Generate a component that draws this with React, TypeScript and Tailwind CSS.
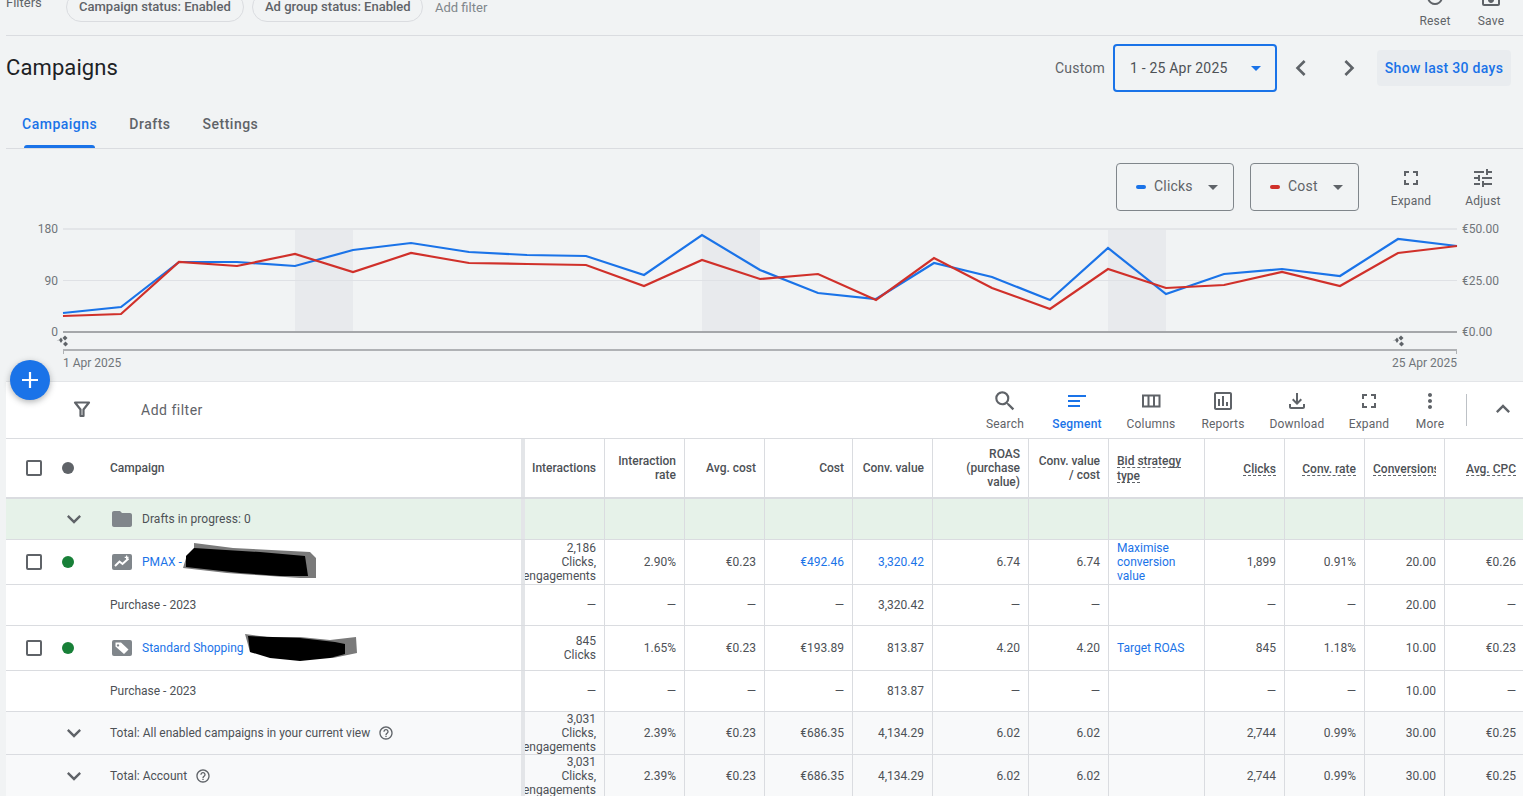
import type { ReactNode } from 'react'
import {
  MdArrowDropDown,
  MdChevronLeft,
  MdChevronRight,
  MdExpandLess,
  MdExpandMore,
  MdFolder,
  MdFullscreen,
  MdHelpOutline,
  MdMoreVert,
  MdOutlineAssessment,
  MdOutlineFileDownload,
  MdOutlineSave,
  MdRefresh,
  MdSearch,
  MdSegment,
  MdTune,
} from 'react-icons/md'

const GRID =
  'grid grid-cols-[519px_80px_80px_80px_88px_80px_96px_80px_96px_80px_80px_80px_80px]'

const xs = [63, 121, 179, 237, 295, 353, 411, 469, 527, 586, 644, 702, 760, 818, 876, 934, 992, 1050, 1108, 1166, 1224, 1282, 1340, 1398, 1457]
const blue = [313, 307, 262, 262, 266, 250, 243, 252, 255, 256, 275, 235, 270, 293, 299, 263, 277, 300, 248, 294, 274, 269, 276, 239, 246]
const red = [316, 314, 262, 266, 254, 272, 253, 263, 264, 265, 286, 260, 279, 274, 300, 258, 288, 309, 269, 288, 285, 272, 286, 253, 246]

const toPoints = (ys: number[]) => ys.map((y, i) => `${xs[i]},${y}`).join(' ')

function Sparkle({ x, y }: { x: number; y: number }) {
  return (
    <g transform={`translate(${x} ${y})`} fill="#5f6368">
      <path d="M-2-3.500-.2-.8-2 2-3.800-.8-6.500-.8-3.800-1.200Z" />
      <path d="M2-5.500 4.500-3 2-.5-.5-3Z" />
      <path d="M2.500.5 5 3 2.500 5.500 0 3Z" />
    </g>
  )
}

function TrendChart() {
  return (
    <svg viewBox="0 211 1523 170" className="block h-[170px] w-[1523px]">
      {[295, 702, 1108].map((x) => (
        <rect key={x} x={x} y={229} width={58} height={102} fill="#e8eaed" />
      ))}
      <line x1={63} x2={1457} y1={229} y2={229} stroke="#e3e5e8" strokeWidth={2} />
      <line x1={63} x2={1457} y1={280.500} y2={280.500} stroke="#dfe1e5" />
      <line x1={63} x2={1457} y1={332} y2={332} stroke="#a5a7aa" strokeWidth={2} />
      <line x1={63} x2={1457} y1={350} y2={350} stroke="#b0b2b5" strokeWidth={2} />
      <line x1={63.500} x2={63.500} y1={350} y2={354} stroke="#b0b2b5" />
      <line x1={1456.500} x2={1456.500} y1={350} y2={354} stroke="#b0b2b5" />
      <polyline points={toPoints(blue)} fill="none" stroke="#1a73e8" strokeWidth={2.200} />
      <polyline points={toPoints(red)} fill="none" stroke="#d0302a" strokeWidth={2.200} />
      <Sparkle x={63} y={341} />
      <Sparkle x={1399} y={341} />
      <g fill="#70757a" fontSize={12}>
        <text x={58} y={233} textAnchor="end">180</text>
        <text x={58} y={285} textAnchor="end">90</text>
        <text x={58} y={336} textAnchor="end">0</text>
        <text x={1462} y={233}>€50.00</text>
        <text x={1462} y={285}>€25.00</text>
        <text x={1462} y={336}>€0.00</text>
        <text x={63} y={367}>1 Apr 2025</text>
        <text x={1457} y={367} textAnchor="end">25 Apr 2025</text>
      </g>
    </svg>
  )
}

function ToolButton({ label, icon, width, active }: { label: string; icon: ReactNode; width: string; active?: boolean }) {
  return (
    <div className={`flex flex-col items-center ${width} ${active ? 'text-[#1a73e8]' : 'text-[#5f6368]'}`}>
      {icon}
      <span className={`mt-1 text-[12px] leading-[14px] tracking-[0.2px] ${active ? 'font-medium' : ''}`}>{label}</span>
    </div>
  )
}

function ColumnsIcon() {
  return (
    <svg viewBox="0 0 24 24" width={24} height={24}>
      <path d="M4 6.500h16.500v11H4ZM9.500 6.500v11M15 6.500v11" fill="none" stroke="currentColor" strokeWidth={2} />
    </svg>
  )
}

function FilterIcon() {
  return (
    <svg viewBox="0 0 24 24" width={24} height={24} className="ml-16 mt-2 text-[#5f6368]">
      <path d="M5 5.500h14l-5.500 7v6.500h-3v-6.500Z" fill="none" stroke="currentColor" strokeWidth={2.200} strokeLinejoin="round" />
    </svg>
  )
}

function MetricSelect({ label, dot, width }: { label: string; dot: string; width: string }) {
  return (
    <div className={`flex h-12 items-center rounded border border-[#80868b] pl-[19px] pr-2 ${width}`}>
      <span className={`h-1 w-2.5 rounded-full ${dot}`} />
      <span className="mb-0.5 ml-2 text-[14px] tracking-[0.2px] text-[#5f6368]">{label}</span>
      <MdArrowDropDown size={24} className="ml-auto text-[#5f6368]" />
    </div>
  )
}

function HeadCell({ children, left }: { children: ReactNode; left?: boolean }) {
  return (
    <div className={`flex flex-col justify-center border-r border-[#dadce0] px-2 text-[12px] font-medium leading-[14px] text-[#4d5156] ${left ? 'items-start' : 'items-end text-right'}`}>
      {children}
    </div>
  )
}

function Dashed({ children }: { children: ReactNode }) {
  return <span className="mt-0.5 block border-b border-dashed border-[#5f6368] leading-[12px]">{children}</span>
}

type Cell = string | string[] | { link: string | string[] }

function BodyCell({ value, left }: { value: Cell; left?: boolean }) {
  const isLink = typeof value === 'object' && !Array.isArray(value)
  const raw = isLink ? (value as { link: string | string[] }).link : (value as string | string[])
  const lines = Array.isArray(raw) ? raw : [raw]
  return (
    <div className={`flex flex-col justify-center overflow-hidden border-r border-[#dadce0] px-2 text-[12px] leading-[14px] ${left ? 'items-start' : 'items-end'} ${isLink ? 'text-[#1a73e8]' : 'text-[#4d5156]'}`}>
      {lines.map((line) => (
        <span key={line} className="whitespace-nowrap">{line}</span>
      ))}
    </div>
  )
}

function Checkbox() {
  return <span className="h-4 w-4 shrink-0 rounded-[2px] border-2 border-[#5f6368] bg-white" />
}

function CampaignIcon({ kind }: { kind: 'pmax' | 'tag' }) {
  return (
    <svg viewBox="0 0 20 16" className="ml-[38px] h-4 w-5 shrink-0">
      <rect width={20} height={16} rx={2} fill="#80868b" />
      {kind === 'pmax' ? (
        <>
          <path d="M3 12 7.500 7.500 10.500 10 16.500 4.500" fill="none" stroke="#fff" strokeWidth={2} />
          <path d="M14 1.500h1.200v1.300h1.300v1.200h-1.300v1.300H14V4h-1.300V2.800H14Z" fill="#fff" />
        </>
      ) : (
        <path d="M3.500 2.500h5.500l7.500 7-4.500 4.500-8.500-7.500ZM6 4.200a1.200 1.200 0 1 0 .01 0Z" fill="#fff" fillRule="evenodd" />
      )}
    </svg>
  )
}

function CampaignLeft({ name, kind }: { name: string; kind: 'pmax' | 'tag' }) {
  return (
    <div className="flex items-center border-r-[4px] border-[#e3e5e8] pl-5">
      <Checkbox />
      <span className="ml-5 h-3 w-3 rounded-full bg-[#188038]" />
      <CampaignIcon kind={kind} />
      <span className="ml-2.5 text-[12px] text-[#1a73e8]">{name}</span>
    </div>
  )
}

function ChevronLeft({ children }: { children: ReactNode }) {
  return (
    <div className="flex items-center border-r-[4px] border-[#e3e5e8] pl-14 text-[12px] text-[#4d5156]">
      <MdExpandMore size={28} className="-mx-0.5 shrink-0 text-[#5f6368]" />
      {children}
    </div>
  )
}

function PlainLeft({ text }: { text: string }) {
  return (
    <div className="flex items-center border-r-[4px] border-[#e3e5e8] pl-[104px] text-[12px] text-[#4d5156]">
      {text}
    </div>
  )
}

function Row({ left, cells, className }: { left: ReactNode; cells: Cell[]; className: string }) {
  return (
    <div className={`${GRID} border-b border-[#dadce0] ${className}`}>
      {left}
      {cells.map((c, i) => (
        <BodyCell key={i} value={c} left={i === 7} />
      ))}
    </div>
  )
}

const totals: Cell[] = [['3,031', 'Clicks,', 'engagements'], '2.39%', '€0.23', '€686.35', '4,134.29', '6.02', '6.02', '', '2,744', '0.99%', '30.00', '€0.25']

export default function App() {
  return (
    <div className="relative h-[796px] w-[1523px] overflow-hidden bg-[#f1f3f4] font-[Roboto,sans-serif]">
      {/* filters */}
      <div className="ml-1.5 flex h-9 items-start border-b border-[#dadce0]">
        <span className="-mt-1 w-[60px] text-[13px] leading-[14px] text-[#5f6368]">Filters</span>
        <div className="-mt-2 flex h-[30px] w-[178px] items-center rounded-full border border-[#dadce0] pl-3 text-[13px] font-medium text-[#5f6368]">Campaign status: Enabled</div>
        <div className="-mt-2 ml-2 flex h-[30px] w-[171px] items-center rounded-full border border-[#dadce0] pl-3 text-[13px] font-medium text-[#5f6368]">Ad group status: Enabled</div>
        <span className="ml-3 text-[13px] leading-[15px] text-[#80868b]">Add filter</span>
        <div className="ml-auto mr-1 flex">
          <div className="flex w-14 flex-col items-center text-[#5f6368]">
            <MdRefresh size={24} className="-mt-[15px]" />
            <span className="mt-[5px] text-[12px] leading-[14px] tracking-[0.2px]">Reset</span>
          </div>
          <div className="flex w-14 flex-col items-center text-[#5f6368]">
            <MdOutlineSave size={24} className="-mt-[15px]" />
            <span className="mt-[5px] text-[12px] leading-[14px] tracking-[0.2px]">Save</span>
          </div>
        </div>
      </div>

      {/* title row */}
      <div className="flex h-16 items-center pl-1.5 pr-3">
        <h1 className="-mt-0.5 text-[22px] font-normal tracking-[0.1px] text-[#202124]">Campaigns</h1>
        <div className="ml-auto flex items-center">
          <span className="text-[14px] tracking-[0.2px] text-[#5f6368]">Custom</span>
          <div className="ml-2 flex h-12 w-[164px] items-center justify-between rounded border-2 border-[#1a73e8] pl-[15px] pr-[7px]">
            <span className="text-[14px] tracking-[0.2px] text-[#4d5156]">1 - 25 Apr 2025</span>
            <MdArrowDropDown size={24} className="text-[#1a73e8]" />
          </div>
          <MdChevronLeft size={32} className="mx-2 text-[#5f6368]" />
          <MdChevronRight size={32} className="mx-2 text-[#5f6368]" />
          <div className="ml-1 flex h-9 w-[134px] items-center justify-center rounded bg-[#e9ecef] text-[14px] font-medium tracking-[0.3px] text-[#1a73e8]">
            Show last 30 days
          </div>
        </div>
      </div>

      {/* tabs */}
      <div className="ml-1.5 flex h-[49px] items-center gap-8 border-b border-[#dadce0] pl-4 text-[14px] font-medium tracking-[0.5px] text-[#5f6368]">
        <div className="relative flex h-full items-center text-[#1a73e8]">
          Campaigns
          <span className="absolute inset-x-0.5 bottom-0 h-[3px] rounded-t bg-[#1a73e8]" />
        </div>
        <span>Drafts</span>
        <span>Settings</span>
      </div>

      {/* chart controls */}
      <div className="flex h-[62px] items-start justify-end pr-1 pt-3.5">
        <MetricSelect label="Clicks" dot="bg-[#1a73e8]" width="w-[118px]" />
        <div className="w-4" />
        <MetricSelect label="Cost" dot="bg-[#d0302a]" width="w-[109px]" />
        <div className="ml-4 mt-[3px] flex">
          <ToolButton label="Expand" width="w-[72px]" icon={<MdFullscreen size={24} />} />
          <ToolButton label="Adjust" width="w-[72px]" icon={<MdTune size={24} />} />
        </div>
      </div>

      <TrendChart />

      {/* add button */}
      <div className="absolute left-2.5 top-[360px] z-10 flex h-10 w-10 items-center justify-center rounded-full bg-[#1a73e8] shadow-[0_2px_6px_rgba(60,64,67,0.4)]">
        <svg viewBox="0 0 20 20" className="h-5 w-5">
          <path d="M10 2v16M2 10h16" stroke="#fff" strokeWidth={2.200} />
        </svg>
      </div>

      {/* table panel */}
      <div className="relative ml-1.5 border-t border-[#e3e5e8] bg-white">
        <div className="flex h-[57px] items-start border-b border-[#dadce0] pr-1.5 pt-[7px]">
          <FilterIcon />
          <span className="ml-[47px] mt-[11px] text-[14px] tracking-[0.5px] text-[#5f6368]">Add filter</span>
          <div className="ml-auto flex items-start">
            <ToolButton label="Search" width="w-[72px]" icon={<MdSearch size={26} className="-my-px" />} />
            <ToolButton label="Segment" width="w-[72px]" active icon={<MdSegment size={24} className="-scale-x-100" />} />
            <ToolButton label="Columns" width="w-[76px]" icon={<ColumnsIcon />} />
            <ToolButton label="Reports" width="w-[68px]" icon={<MdOutlineAssessment size={24} />} />
            <ToolButton label="Download" width="w-[80px]" icon={<MdOutlineFileDownload size={24} />} />
            <ToolButton label="Expand" width="w-[64px]" icon={<MdFullscreen size={24} />} />
            <ToolButton label="More" width="w-[58px]" icon={<MdMoreVert size={24} />} />
            <span className="ml-[7px] mt-[5px] h-8 w-px bg-[#bdc1c6]" />
            <MdExpandLess size={28} className="ml-[22px] mt-[6px] text-[#5f6368]" />
          </div>
        </div>

        <div className={`${GRID} h-[60px] border-b-2 border-[#dadce0]`}>
          <div className="flex items-center border-r-[4px] border-[#e3e5e8] pl-5">
            <Checkbox />
            <span className="ml-5 h-3 w-3 rounded-full bg-[#5f6368]" />
            <span className="ml-9 text-[12px] font-medium text-[#4d5156]">Campaign</span>
          </div>
          <HeadCell>Interactions</HeadCell>
          <HeadCell>Interaction<br />rate</HeadCell>
          <HeadCell>Avg. cost</HeadCell>
          <HeadCell>Cost</HeadCell>
          <HeadCell>Conv. value</HeadCell>
          <HeadCell>ROAS<br />(purchase<br />value)</HeadCell>
          <HeadCell>Conv. value<br />/ cost</HeadCell>
          <HeadCell left>
            <Dashed>Bid strategy</Dashed>
            <Dashed>type</Dashed>
          </HeadCell>
          <HeadCell><Dashed>Clicks</Dashed></HeadCell>
          <HeadCell><Dashed>Conv. rate</Dashed></HeadCell>
          <HeadCell>
            <span className="mt-0.5 w-[63px] overflow-hidden whitespace-nowrap border-b border-dashed border-[#5f6368] text-left leading-[12px]">Conversions</span>
          </HeadCell>
          <HeadCell><Dashed>Avg. CPC</Dashed></HeadCell>
        </div>

        <Row
          className="h-[41px] bg-[#e6f2e9]"
          left={
            <ChevronLeft>
              <MdFolder size={24} className="ml-6 shrink-0 text-[#80868b]" />
              <span className="ml-2 tracking-[0.05px]">Drafts in progress: 0</span>
            </ChevronLeft>
          }
          cells={['', '', '', '', '', '', '', '', '', '', '', '']}
        />
        <Row
          className="h-[45px]"
          left={<CampaignLeft name="PMAX -" kind="pmax" />}
          cells={[['2,186', 'Clicks,', 'engagements'], '2.90%', '€0.23', { link: '€492.46' }, { link: '3,320.42' }, '6.74', '6.74', { link: ['Maximise', 'conversion', 'value'] }, '1,899', '0.91%', '20.00', '€0.26']}
        />
        <Row
          className="h-[41px]"
          left={<PlainLeft text="Purchase - 2023" />}
          cells={['—', '—', '—', '—', '3,320.42', '—', '—', '', '—', '—', '20.00', '—']}
        />
        <Row
          className="h-[45px]"
          left={<CampaignLeft name="Standard Shopping" kind="tag" />}
          cells={[['845', 'Clicks'], '1.65%', '€0.23', '€193.89', '813.87', '4.20', '4.20', { link: 'Target ROAS' }, '845', '1.18%', '10.00', '€0.23']}
        />
        <Row
          className="h-[41px]"
          left={<PlainLeft text="Purchase - 2023" />}
          cells={['—', '—', '—', '—', '813.87', '—', '—', '', '—', '—', '10.00', '—']}
        />
        <Row
          className="h-[43px] bg-[#f8f9fa]"
          left={
            <ChevronLeft>
              <span className="ml-6">Total: All enabled campaigns in your current view</span>
              <MdHelpOutline size={16} className="ml-2 text-[#5f6368]" />
            </ChevronLeft>
          }
          cells={totals}
        />
        <Row
          className="h-[43px] bg-[#f8f9fa]"
          left={
            <ChevronLeft>
              <span className="ml-6">Total: Account</span>
              <MdHelpOutline size={16} className="ml-2 text-[#5f6368]" />
            </ChevronLeft>
          }
          cells={totals}
        />

        {/* redaction scribbles */}
        <svg viewBox="6 382 518 414" className="pointer-events-none absolute left-0 top-0 h-[414px] w-[518px] blur-[0.5px]">
          <path d="M194 543 233 548 310 552 316 558 316 578 300 578 270 576 227 573 183 568 187 555 194 552Z" fill="#7a7a7a" />
          <path d="M186 556 194 548 260 552 305 556 308 576 280 576 240 573 186 567Z" fill="#000" />
          <path d="M245 634 267 637 300 637 330 640 356 637 357 653 333 658 283 658 250 652Z" fill="#7a7a7a" />
          <path d="M248 636 300 638 335 642 345 644 345 654 330 658 300 661 270 658 250 652Z" fill="#000" />
        </svg>
      </div>
    </div>
  )
}
